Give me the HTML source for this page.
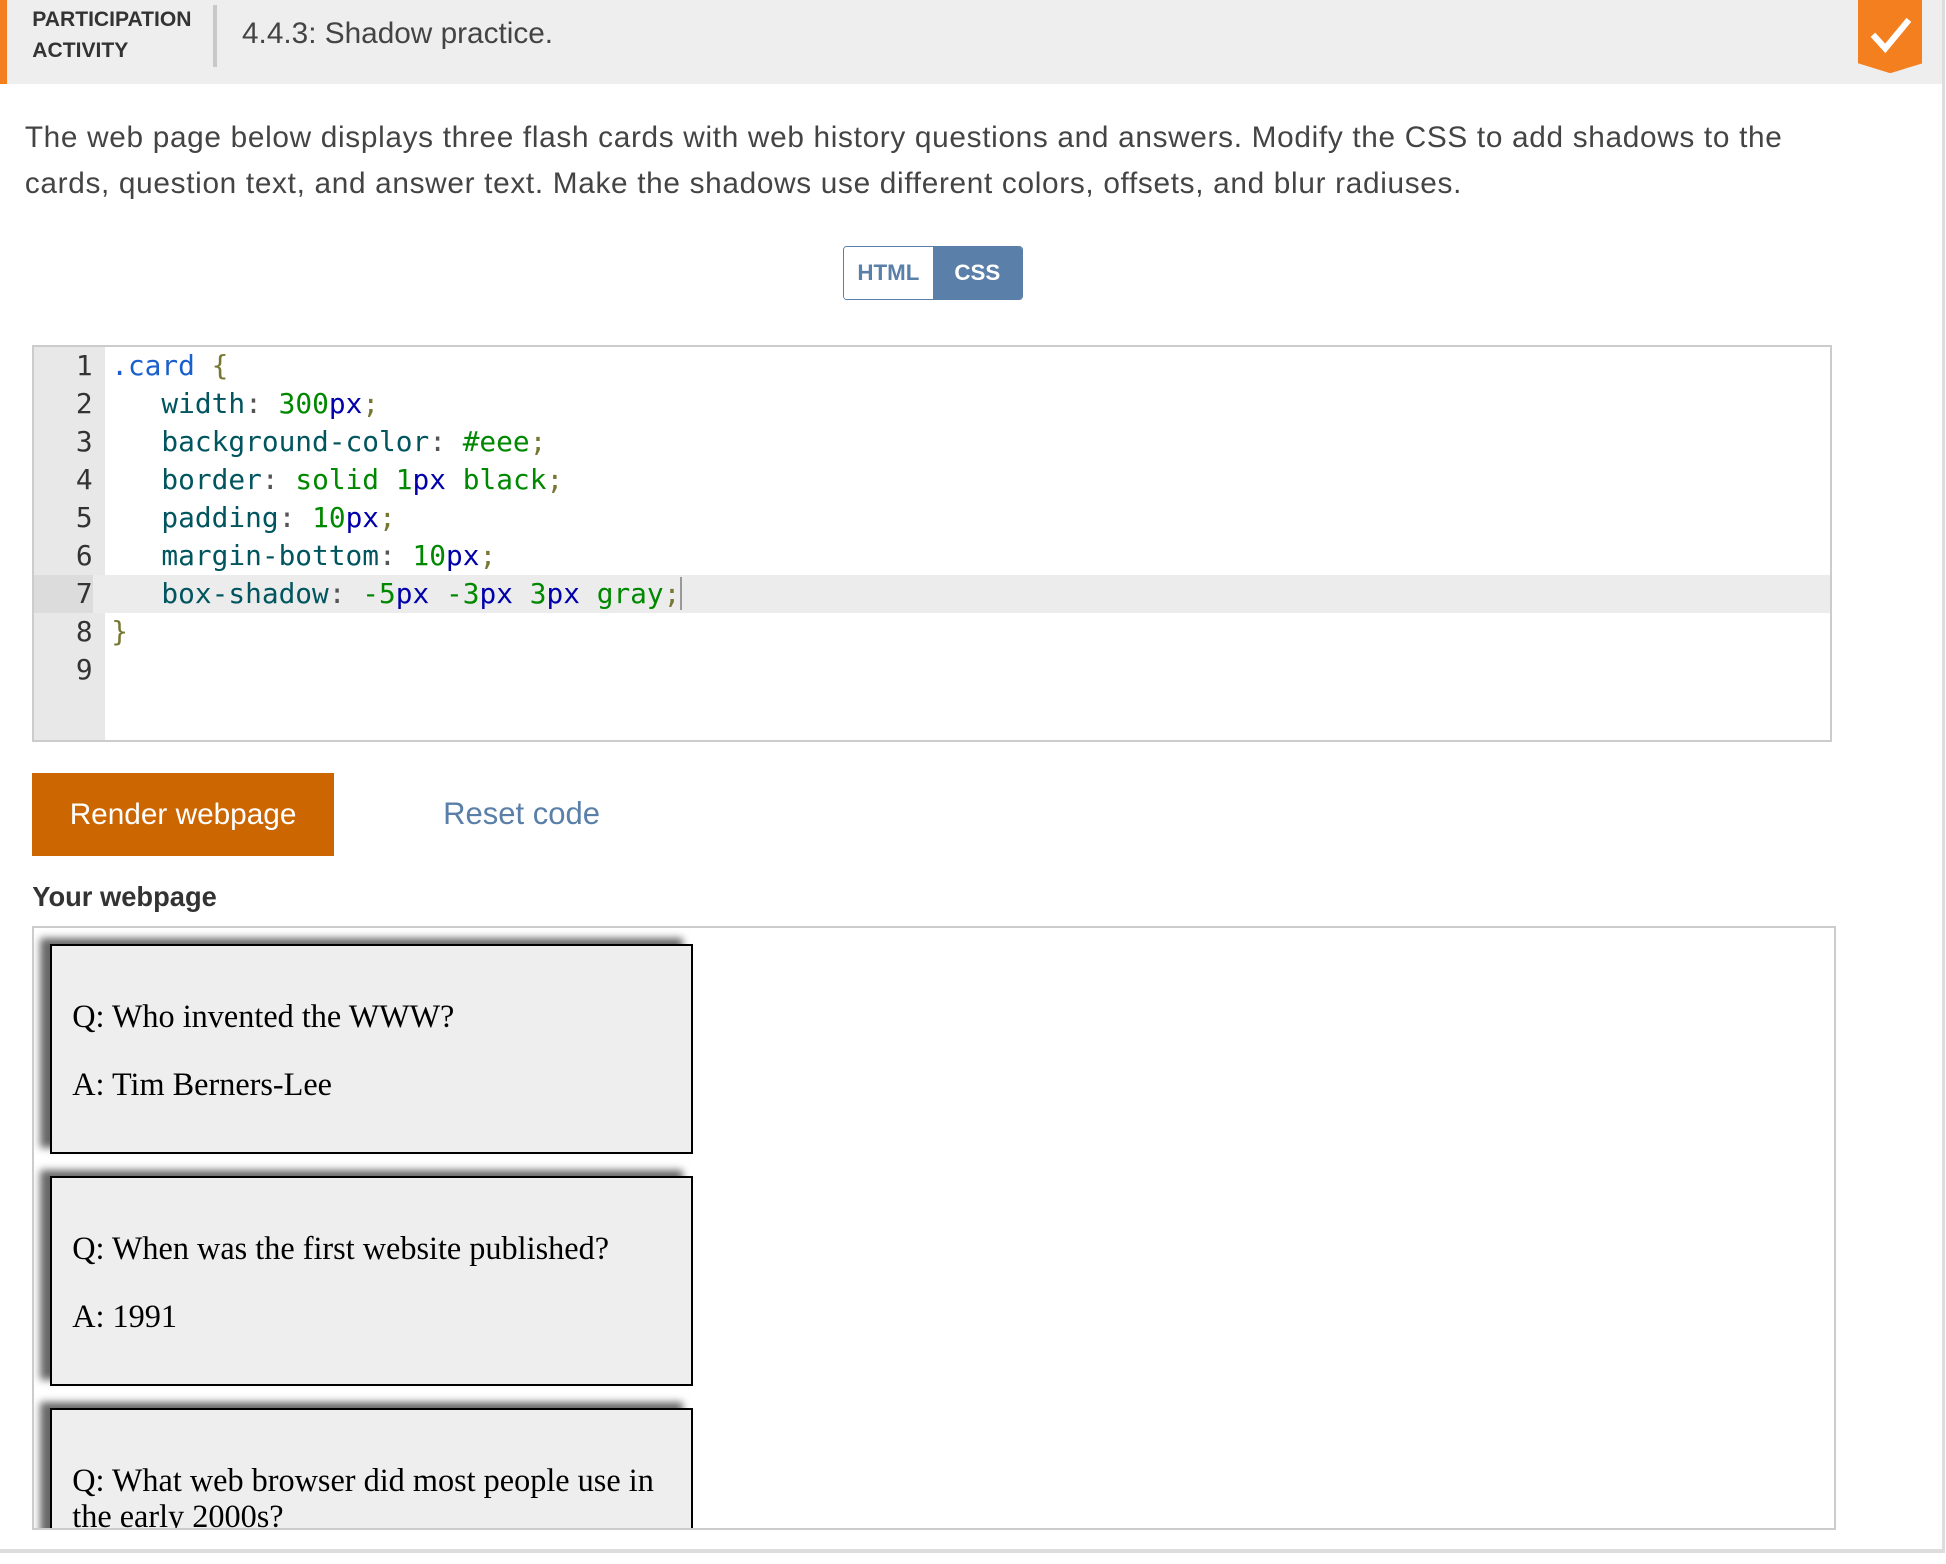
<!DOCTYPE html>
<html><head><meta charset="utf-8">
<style>
html{zoom:1.2411;}
body{margin:0;width:1568px;height:1260px;background:#fff;font-family:"Liberation Sans",sans-serif;color:#333;position:relative;overflow:hidden;}
.abs{position:absolute;}
.hdr{left:0;top:0;width:1565px;height:68px;background:#eeeeee;}
.obar{left:0;top:0;width:6px;height:68px;background:#f47f1f;}
.pa{left:26px;top:3px;font-weight:bold;font-size:17px;line-height:25px;color:#333;}
.sep{left:172px;top:4px;width:3px;height:50px;background:#c8c8c8;}
.title{left:195px;top:14px;font-size:24px;color:#444;}
.badge{left:1497px;top:0;width:52px;height:59px;}
.rline{left:1565px;top:0;width:2px;height:1250px;background:#ddd;}
.bline{left:0;top:1248px;width:1567px;height:3px;background:#ddd;}
.para{left:20px;top:93px;font-size:24px;line-height:37px;color:#444;width:1440px;letter-spacing:0.55px;}
.tog{left:679px;top:198px;width:145px;height:44px;border-radius:3px;overflow:hidden;border:1px solid #5a7fa8;box-sizing:border-box;display:flex;font-weight:bold;font-size:18px;}
.tog div{display:flex;align-items:center;justify-content:center;}
.code{left:26px;top:278px;width:1450px;height:320px;border:2px solid #ccc;box-sizing:border-box;font-family:"DejaVu Sans Mono","Liberation Mono",monospace;font-size:22.4px;}
.gut{position:absolute;left:0;top:0;width:57px;height:100%;background:#e8e8e8;}
.ln{position:absolute;left:0;height:30.6px;width:100%;line-height:30.6px;white-space:pre;}
.ln .n{display:inline-block;width:47px;text-align:right;color:#333;margin-right:15px;}
.hl{background:#ececec;}
.hl .n{background:#dcdcdc;}
.p{color:#00555f}.g{color:#008800}.b{color:#0000aa}.o{color:#777733}.c{color:#1a5fcc}.k{color:#555}
.btn{left:26px;top:623px;width:243px;height:67px;background:#cc6600;color:#fff;font-size:24px;display:flex;align-items:center;justify-content:center;}
.reset{left:357px;top:641px;font-size:25px;color:#5a7fa8;}
.yw{left:26px;top:710px;font-size:22px;font-weight:bold;color:#333;}
.frame{left:26px;top:746px;width:1453px;height:487px;border:2px solid #ccc;box-sizing:border-box;overflow:hidden;}
.card{position:absolute;left:13px;width:518px;height:169px;border:2px solid #000;box-sizing:border-box;background:#eee;box-shadow:-8px -5px 6px #666;font-family:"Liberation Serif",serif;font-size:26px;line-height:29px;color:#000;padding:16px 16px;}
.card p{margin:26px 0;}
</style></head><body>
<div class="abs hdr"></div>
<div class="abs obar"></div>
<div class="abs pa">PARTICIPATION<br>ACTIVITY</div>
<div class="abs sep"></div>
<div class="abs title">4.4.3: Shadow practice.</div>
<svg class="abs badge" viewBox="0 0 52 59"><path d="M0 0H52V51L26 59L0 51Z" fill="#f47f1f"/><path d="M12 28L22 39L41 16" stroke="#fff" stroke-width="5" fill="none"/></svg>
<div class="abs rline"></div>
<div class="abs bline"></div>
<div class="abs para">The web page below displays three flash cards with web history questions and answers. Modify the CSS to add shadows to the cards, question text, and answer text. Make the shadows use different colors, offsets, and blur radiuses.</div>
<div class="abs tog"><div style="width:72px;background:#fff;color:#5a7fa8;">HTML</div><div style="flex:1;background:#5a7fa8;color:#fff;">CSS</div></div>
<div class="abs code">
<div class="gut"></div>
<div class="ln" style="top:0"><span class="n">1</span><span class="c">.card</span> <span class="o">{</span></div>
<div class="ln" style="top:30.6px"><span class="n">2</span>   <span class="p">width</span><span class="k">:</span> <span class="g">300</span><span class="b">px</span><span class="o">;</span></div>
<div class="ln" style="top:61.2px"><span class="n">3</span>   <span class="p">background-color</span><span class="k">:</span> <span class="g">#eee</span><span class="o">;</span></div>
<div class="ln" style="top:91.8px"><span class="n">4</span>   <span class="p">border</span><span class="k">:</span> <span class="g">solid</span> <span class="g">1</span><span class="b">px</span> <span class="g">black</span><span class="o">;</span></div>
<div class="ln" style="top:122.4px"><span class="n">5</span>   <span class="p">padding</span><span class="k">:</span> <span class="g">10</span><span class="b">px</span><span class="o">;</span></div>
<div class="ln" style="top:153px"><span class="n">6</span>   <span class="p">margin-bottom</span><span class="k">:</span> <span class="g">10</span><span class="b">px</span><span class="o">;</span></div>
<div class="ln hl" style="top:183.6px"><span class="n">7</span>   <span class="p">box-shadow</span><span class="k">:</span> <span class="g">-5</span><span class="b">px</span> <span class="g">-3</span><span class="b">px</span> <span class="g">3</span><span class="b">px</span> <span class="g">gray</span><span class="o">;</span><span style="border-left:2px solid #999;"></span></div>
<div class="ln" style="top:214.2px"><span class="n">8</span><span class="o">}</span></div>
<div class="ln" style="top:244.8px"><span class="n">9</span></div>
</div>
<div class="abs btn">Render webpage</div>
<div class="abs reset">Reset code</div>
<div class="abs yw">Your webpage</div>
<div class="abs frame">
<div class="card" style="top:13px"><p>Q: Who invented the WWW?</p><p>A: Tim Berners-Lee</p></div>
<div class="card" style="top:200px"><p>Q: When was the first website published?</p><p>A: 1991</p></div>
<div class="card" style="top:387px"><p>Q: What web browser did most people use in the early 2000s?</p></div>
</div>
</body></html>
